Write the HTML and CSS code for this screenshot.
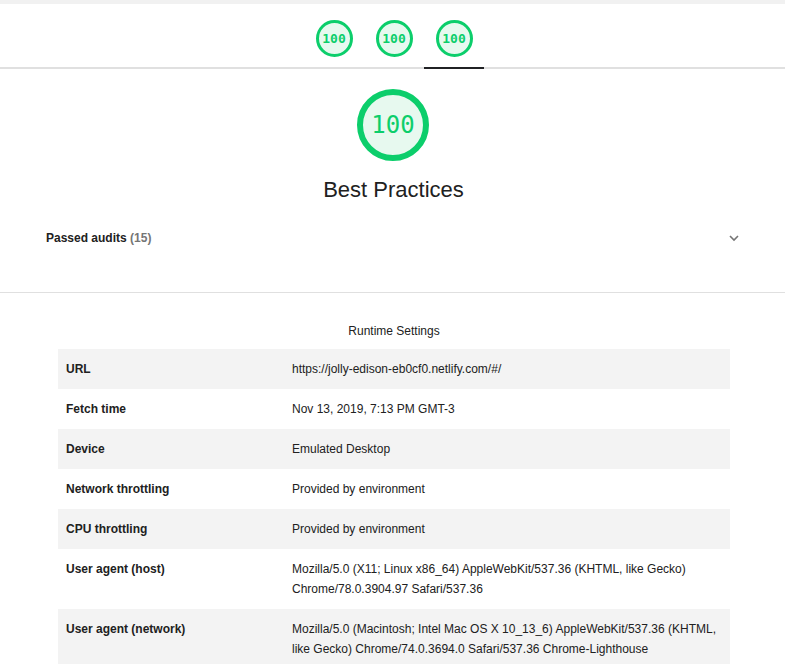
FILE: index.html
```html
<!DOCTYPE html>
<html>
<head>
<meta charset="utf-8">
<link rel="stylesheet" href="styles.css">
</head>
<body>
<div class="topstrip"></div>
<header class="tabs">
  <div class="tab"><div class="gauge small">100</div></div>
  <div class="tab"><div class="gauge small">100</div></div>
  <div class="tab active"><div class="gauge small">100</div></div>
</header>
<section class="category">
  <div class="gauge big">100</div>
  <div class="cat-title">Best Practices</div>
  <div class="passed">
    <span class="passed-label">Passed audits <span class="count">(15)</span></span>
    <svg class="chevron" width="12" height="8" viewBox="0 0 12 8"><path d="M2 2 L6 6 L10 2" fill="none" stroke="#757575" stroke-width="1.6"/></svg>
  </div>
</section>
<section class="runtime">
  <div class="rt-title">Runtime Settings</div>
  <div class="env">
    <div class="row"><div class="k">URL</div><div class="v">https://jolly-edison-eb0cf0.netlify.com/#/</div></div>
    <div class="row"><div class="k">Fetch time</div><div class="v">Nov 13, 2019, 7:13 PM GMT-3</div></div>
    <div class="row"><div class="k">Device</div><div class="v">Emulated Desktop</div></div>
    <div class="row"><div class="k">Network throttling</div><div class="v">Provided by environment</div></div>
    <div class="row"><div class="k">CPU throttling</div><div class="v">Provided by environment</div></div>
    <div class="row"><div class="k">User agent (host)</div><div class="v">Mozilla/5.0 (X11; Linux x86_64) AppleWebKit/537.36 (KHTML, like Gecko) Chrome/78.0.3904.97 Safari/537.36</div></div>
    <div class="row"><div class="k">User agent (network)</div><div class="v">Mozilla/5.0 (Macintosh; Intel Mac OS X 10_13_6) AppleWebKit/537.36 (KHTML, like Gecko) Chrome/74.0.3694.0 Safari/537.36 Chrome-Lighthouse</div></div>
  </div>
</section>
</body>
</html>
```
FILE: styles.css
```css
* { box-sizing: border-box; }
html, body { margin: 0; padding: 0; background: #fff; }
body {
  font-family: "Liberation Sans", Arial, Helvetica, sans-serif;
  color: #212121;
  font-size: 12px;
  line-height: 20px;
}
.topstrip { height: 4px; background: #f1f1f1; }
.tabs {
  display: flex;
  justify-content: center;
  height: 65px;
  border-bottom: 2px solid #e0e0e0;
  padding-left: 3px;
}
.tab {
  width: 60px;
  display: flex;
  justify-content: center;
  align-items: flex-start;
  padding-top: 16px;
  margin-bottom: -2px;
  border-bottom: 2px solid transparent;
}
.tab.active { border-bottom-color: #202124; }
.gauge {
  border-radius: 50%;
  border-style: solid;
  border-color: #0cce6b;
  background: #e7f9ef;
  color: #0cce6b;
  font-family: "DejaVu Sans Mono", "Liberation Mono", monospace;
  display: flex;
  align-items: center;
  justify-content: center;
}
.gauge.small {
  width: 37px;
  height: 37px;
  border-width: 3px;
  font-size: 13px;
  font-weight: bold;
}
.gauge.big {
  width: 72px;
  height: 72px;
  border-width: 6px;
  font-size: 24px;
}
.category {
  display: flex;
  flex-direction: column;
  align-items: center;
  padding: 20px 45px 0 46px;
  border-bottom: 1px solid #e0e0e0;
}
.cat-title {
  margin-top: 16px;
  font-size: 22px;
  line-height: 26px;
  color: #212121;
  padding-left: 1px;
}
.passed {
  align-self: stretch;
  display: flex;
  justify-content: space-between;
  align-items: center;
  margin-top: 25px;
  margin-bottom: 44px;
  height: 20px;
}
.passed-label { font-weight: bold; font-size: 12px; }
.count { color: #757575; }
.runtime {
  padding: 28px 55px 0 58px;
}
.rt-title {
  text-align: center;
  margin-bottom: 8px;
}
.env .row {
  display: grid;
  grid-template-columns: 226px 1fr;
}
.env .row:nth-child(odd) { background: #f3f3f3; }
.env .k, .env .v { padding: 10px 8px; }
.env .k { font-weight: bold; }
```
